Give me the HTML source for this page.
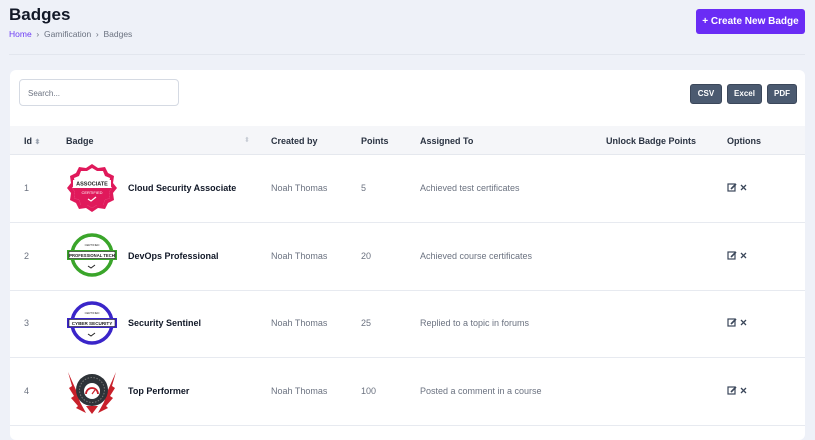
<!DOCTYPE html>
<html><head><meta charset="utf-8"><style>
*{box-sizing:border-box;margin:0;padding:0}
body{width:815px;height:430px;overflow:hidden;background:#eef1f8;font-family:"Liberation Sans",sans-serif;position:relative;color:#1f2937}
.a{position:absolute}
h1{position:absolute;left:9px;top:5px;font-size:17px;font-weight:700;color:#111827}
.bc{left:9px;top:29px;font-size:8.5px;color:#6b7280}
.bc span.h{color:#6d3df5}
.hr{left:9px;top:54px;width:796px;height:1px;background:#e2e6ee}
.btn{left:696px;top:9px;width:109px;height:25px;background:#6a2cf5;border-radius:3px;color:#fff;font-size:10px;font-weight:700;text-align:center;line-height:25px}
.card{left:10px;top:70px;width:795px;height:370px;background:#fff;border-radius:6px}
.srch{left:19px;top:79px;width:160px;height:27px;border:1px solid #d5dae3;border-radius:4px;font-size:8px;color:#6b7280;padding:9px 0 0 8px}
.eb{top:84px;height:20px;background:#4b5a70;border:1px solid #3b475a;border-radius:3px;color:#fff;font-size:8px;font-weight:700;text-align:center;line-height:18px}
.th{left:10px;top:126px;width:795px;height:29px;background:#f5f6f9;border-bottom:1px solid #e5e8ee}
.hd{top:136px;font-size:9px;font-weight:700;color:#2a3342}
.row{left:10px;width:795px;height:1px;background:#e7eaf0}
.g{color:#6b7280;font-size:9px}
.n{font-size:9px;font-weight:700;color:#111827}
</style></head><body>
<h1>Badges</h1>
<div class="a bc"><span class="h">Home</span> &nbsp;›&nbsp; Gamification &nbsp;›&nbsp; Badges</div>
<div class="a hr"></div>
<div class="a btn">+ Create New Badge</div>
<div class="a card"></div>
<div class="a srch">Search...</div>
<div class="a eb" style="left:690px;width:32px">CSV</div>
<div class="a eb" style="left:727px;width:35px">Excel</div>
<div class="a eb" style="left:767px;width:30px">PDF</div>
<div class="a th"></div>
<div class="a hd" style="left:24px">Id <span style="color:#9aa3b0;font-size:7px">⬍</span></div>
<div class="a hd" style="left:66px">Badge</div>
<div class="a" style="left:244px;top:136px;color:#c5cad3;font-size:7px">⬍</div>
<div class="a hd" style="left:271px">Created by</div>
<div class="a hd" style="left:361px">Points</div>
<div class="a hd" style="left:420px">Assigned To</div>
<div class="a hd" style="left:606px">Unlock Badge Points</div>
<div class="a hd" style="left:727px">Options</div>

<div class="a g" style="left:24px;top:183px">1</div>
<div class="a g" style="left:24px;top:251px">2</div>
<div class="a g" style="left:24px;top:318px">3</div>
<div class="a g" style="left:24px;top:386px">4</div>

<div class="a n" style="left:128px;top:183px">Cloud Security Associate</div>
<div class="a n" style="left:128px;top:251px">DevOps Professional</div>
<div class="a n" style="left:128px;top:318px">Security Sentinel</div>
<div class="a n" style="left:128px;top:386px">Top Performer</div>

<div class="a g" style="left:271px;top:183px">Noah Thomas</div>
<div class="a g" style="left:271px;top:251px">Noah Thomas</div>
<div class="a g" style="left:271px;top:318px">Noah Thomas</div>
<div class="a g" style="left:271px;top:386px">Noah Thomas</div>

<div class="a g" style="left:361px;top:183px">5</div>
<div class="a g" style="left:361px;top:251px">20</div>
<div class="a g" style="left:361px;top:318px">25</div>
<div class="a g" style="left:361px;top:386px">100</div>

<div class="a g" style="left:420px;top:183px">Achieved test certificates</div>
<div class="a g" style="left:420px;top:251px">Achieved course certificates</div>
<div class="a g" style="left:420px;top:318px">Replied to a topic in forums</div>
<div class="a g" style="left:420px;top:386px">Posted a comment in a course</div>

<div class="a row" style="top:222px"></div>
<div class="a row" style="top:290px"></div>
<div class="a row" style="top:357px"></div>
<div class="a row" style="top:425px"></div>

<svg class="a" style="left:727px;top:182px" width="22" height="12" viewBox="0 0 22 12"><rect x="1" y="2" width="7" height="7" fill="none" stroke="#3b475a" stroke-width="1.2"/><path d="M4 7l5-5" stroke="#3b475a" stroke-width="1.6"/><path d="M14 3l5 5M19 3l-5 5" stroke="#3b475a" stroke-width="1.3"/></svg>
<svg class="a" style="left:727px;top:250px" width="22" height="12" viewBox="0 0 22 12"><rect x="1" y="2" width="7" height="7" fill="none" stroke="#3b475a" stroke-width="1.2"/><path d="M4 7l5-5" stroke="#3b475a" stroke-width="1.6"/><path d="M14 3l5 5M19 3l-5 5" stroke="#3b475a" stroke-width="1.3"/></svg>
<svg class="a" style="left:727px;top:317px" width="22" height="12" viewBox="0 0 22 12"><rect x="1" y="2" width="7" height="7" fill="none" stroke="#3b475a" stroke-width="1.2"/><path d="M4 7l5-5" stroke="#3b475a" stroke-width="1.6"/><path d="M14 3l5 5M19 3l-5 5" stroke="#3b475a" stroke-width="1.3"/></svg>
<svg class="a" style="left:727px;top:385px" width="22" height="12" viewBox="0 0 22 12"><rect x="1" y="2" width="7" height="7" fill="none" stroke="#3b475a" stroke-width="1.2"/><path d="M4 7l5-5" stroke="#3b475a" stroke-width="1.6"/><path d="M14 3l5 5M19 3l-5 5" stroke="#3b475a" stroke-width="1.3"/></svg>

<svg class="a" style="left:66px;top:163px" width="52" height="50" viewBox="0 0 52 50">
<polygon points="26,1 32,5 39,4 42,10 48,13 47,20 51,25 47,30 48,37 42,40 39,46 32,45 26,49 20,45 13,46 10,40 4,37 5,30 1,25 5,20 4,13 10,10 13,4 20,5" fill="#e0195b"/>
<polygon points="26,5 31,8 37,8 39,13 44,15 43,21 46,25 43,29 44,35 39,37 37,42 31,42 26,45 21,42 15,42 13,37 8,35 9,29 6,25 9,21 8,15 13,13 15,8 21,8" fill="#fff"/>
<path d="M6,25 L9,29 8,35 13,37 15,42 21,42 26,45 31,42 37,42 39,37 44,35 43,29 46,25Z" fill="#e0195b"/>
<rect x="7" y="17" width="38" height="7" fill="#fff"/>
<text x="26" y="22.5" font-size="5.5" font-weight="700" text-anchor="middle" fill="#222" font-family="Liberation Sans">ASSOCIATE</text>
<text x="26" y="31" font-size="4" text-anchor="middle" fill="#fff" font-family="Liberation Sans">CERTIFIED</text>
<path d="M22,36l3,2 5-4" stroke="#fff" fill="none" stroke-width="1.2"/>
</svg>
<svg class="a" style="left:66px;top:232px" width="52" height="46" viewBox="0 0 52 46">
<circle cx="26" cy="23" r="20" fill="#fff" stroke="#3aa52a" stroke-width="3.5"/>
<rect x="1" y="18" width="50" height="10" fill="#3aa52a"/><rect x="3" y="19.5" width="46" height="7" fill="#fff" stroke="#222" stroke-width=".6"/>
<text x="26" y="25" font-size="4.2" font-weight="700" text-anchor="middle" fill="#222" font-family="Liberation Sans">PROFESSIONAL TECH</text>
<text x="26" y="14" font-size="2.8" text-anchor="middle" fill="#333" font-family="Liberation Sans">CERTIFIED</text>
<path d="M22,34l3,2 4-3" stroke="#222" fill="none" stroke-width="1"/>
</svg>
<svg class="a" style="left:66px;top:300px" width="52" height="46" viewBox="0 0 52 46">
<circle cx="26" cy="23" r="20" fill="#fff" stroke="#3a25c9" stroke-width="3.5"/>
<rect x="1" y="18" width="50" height="10" fill="#3a25c9"/><rect x="3" y="19.5" width="46" height="7" fill="#fff" stroke="#222" stroke-width=".6"/>
<text x="26" y="25" font-size="4.6" font-weight="700" text-anchor="middle" fill="#222" font-family="Liberation Sans">CYBER SECURITY</text>
<text x="26" y="14" font-size="2.8" text-anchor="middle" fill="#333" font-family="Liberation Sans">CERTIFIED</text>
<path d="M22,34l3,2 4-3" stroke="#222" fill="none" stroke-width="1"/>
</svg>
<svg class="a" style="left:66px;top:366px" width="52" height="50" viewBox="0 0 52 50">
<path d="M2,6 L6,20 3,22 8,30 5,32 12,40 10,42 20,47 14,36 10,24Z" fill="#c8202a"/>
<path d="M50,6 L46,20 49,22 44,30 47,32 40,40 42,42 32,47 38,36 42,24Z" fill="#c8202a"/>
<path d="M20,40 L26,48 32,40Z" fill="#c8202a"/>
<circle cx="26" cy="24" r="16" fill="#2e3338"/>
<circle cx="26" cy="24" r="12.5" fill="none" stroke="#777" stroke-width="1" stroke-dasharray="1.5 1.5"/>
<circle cx="26" cy="25" r="8" fill="#fff"/>
<path d="M20,28a6,6 0 0 1 12,0" fill="none" stroke="#c8202a" stroke-width="1.8"/>
<path d="M26,28l3,-4" stroke="#c8202a" stroke-width="1.2"/>
</svg>
</body></html>
